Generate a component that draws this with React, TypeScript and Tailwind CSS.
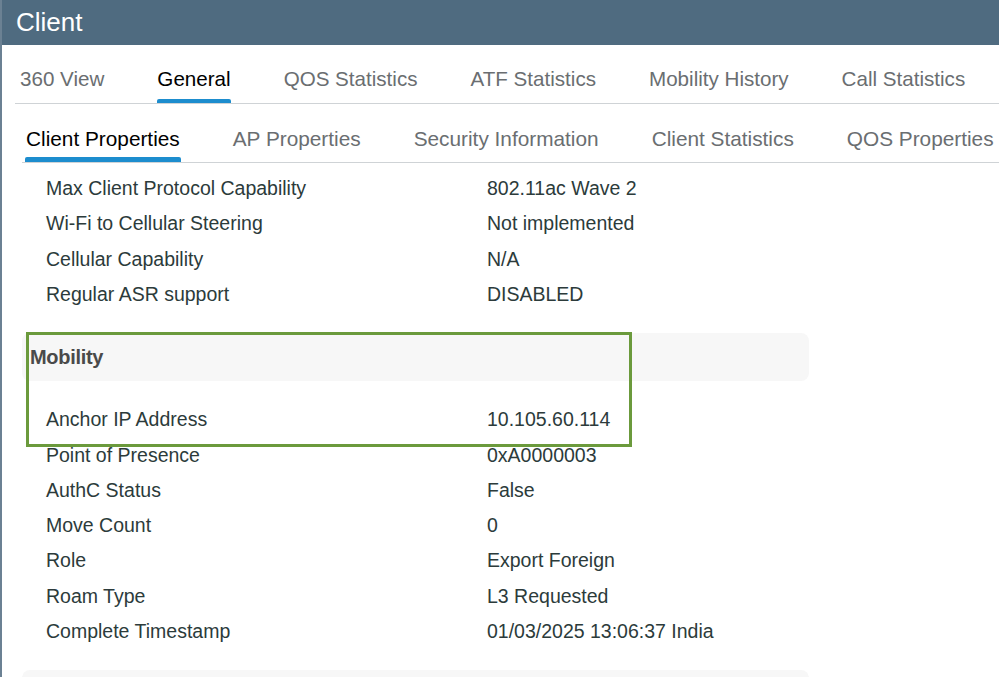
const TOP_TABS = ['360 View', 'General', 'QOS Statistics', 'ATF Statistics', 'Mobility History', 'Call Statistics']
const SUB_TABS = ['Client Properties', 'AP Properties', 'Security Information', 'Client Statistics', 'QOS Properties']

const PROPS: [string, string][] = [
  ['Max Client Protocol Capability', '802.11ac Wave 2'],
  ['Wi-Fi to Cellular Steering', 'Not implemented'],
  ['Cellular Capability', 'N/A'],
  ['Regular ASR support', 'DISABLED'],
]

const MOBILITY: [string, string][] = [
  ['Point of Presence', '0xA0000003'],
  ['AuthC Status', 'False'],
  ['Move Count', '0'],
  ['Role', 'Export Foreign'],
  ['Roam Type', 'L3 Requested'],
  ['Complete Timestamp', '01/03/2025 13:06:37 India'],
]

function Row({ label, value }: { label: string; value: string }) {
  return (
    <div className="flex h-[35.3px] items-center text-[19.5px] text-[#2c3b3b]">
      <div className="w-[465px] pl-[24px]">{label}</div>
      <div>{value}</div>
    </div>
  )
}

function Tabs({ items, active, bar, text }: { items: string[]; active: number; bar: string; text: string }) {
  return (
    <>
      {items.map((t, i) => (
        <div
          key={t}
          className={`flex h-full shrink-0 flex-col px-[4px] ${text} ${i === active ? 'text-black' : 'text-[#6a6e71]'}`}
        >
          <span className="mt-auto whitespace-nowrap leading-[21px]">{t}</span>
          <div className={`${bar} rounded-t-[2px] ${i === active ? 'bg-[#1d8dce]' : ''}`} />
        </div>
      ))}
    </>
  )
}

export default function App() {
  return (
    <div
      className="h-[677px] w-[999px] overflow-hidden border-l-2 border-[#6b8193] bg-white"
      style={{ fontFamily: '"Helvetica Neue", "Liberation Sans", Arial, sans-serif' }}
    >
      {/* Header */}
      <div className="flex h-[45px] items-center bg-[#4f6b80] pl-[14px] text-[26px] text-white">Client</div>

      {/* Top tabs */}
      <div className="ml-[13px] flex h-[59px] gap-[45px] overflow-hidden border-b border-[#cfd3d6] pl-[1px]">
        <Tabs items={TOP_TABS} active={1} bar="mt-[10px] h-[4px]" text="text-[20.6px]" />
      </div>

      {/* Sub tabs */}
      <div className="ml-[20px] flex h-[59px] gap-[45px] overflow-hidden border-b border-[#cfd3d6]">
        <Tabs items={SUB_TABS} active={0} bar="mt-[8px] h-[5px] -mx-[1px]" text="text-[20.8px]" />
      </div>

      {/* Properties */}
      <div className="ml-[20px] pt-[8px]">
        {PROPS.map(([l, v]) => (
          <Row key={l} label={l} value={v} />
        ))}
      </div>

      {/* Mobility */}
      <div className="relative ml-[20px] mt-[21px] w-[787px]">
        <div className="flex h-[48px] items-center rounded-[8px] bg-[#f7f7f7] pl-[8px] text-[20px] font-bold tracking-[-0.3px] text-[#4a4a4a]">
          Mobility
        </div>
        <div className="pt-[21px]">
          <Row label="Anchor IP Address" value="10.105.60.114" />
        </div>
        <div className="pointer-events-none absolute left-[4px] top-[-1px] h-[115px] w-[606px] border-[3px] border-[#6b9a3c]" />
        {MOBILITY.map(([l, v]) => (
          <Row key={l} label={l} value={v} />
        ))}
        <div className="mt-[21px] h-[48px] rounded-[8px] bg-[#f7f7f7]" />
      </div>
    </div>
  )
}
